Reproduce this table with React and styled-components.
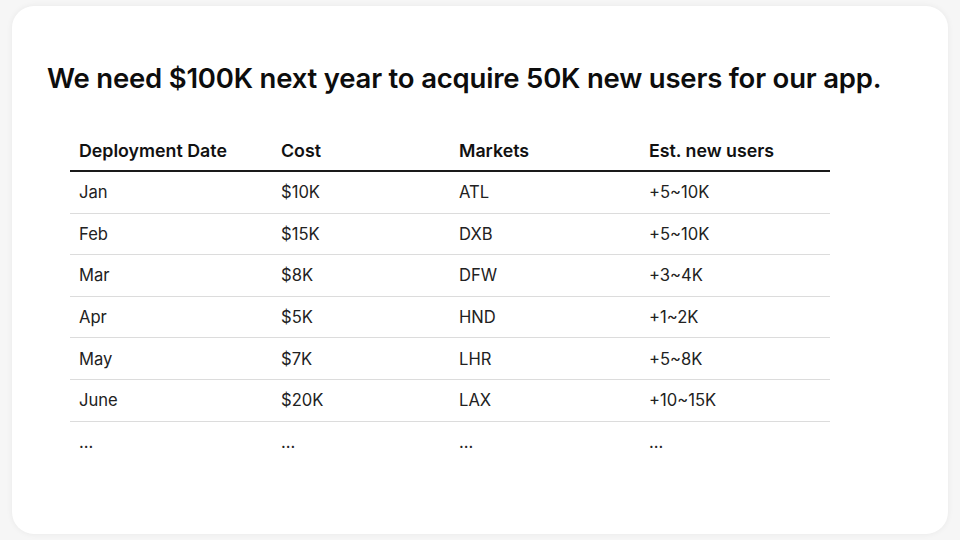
import styled, { createGlobalStyle } from 'styled-components'

const GlobalStyle = createGlobalStyle`
html, body {
    margin: 0;
    padding: 0;
    background: #f6f6f6;
    font-family: Inter, "Noto Sans", sans-serif;
    color: #111;
}
`

const Page = styled.div`
width: 960px;
height: 540px;
padding: 6px 12px;
box-sizing: border-box;
display: flex;
`

const Card = styled.div`
flex: 1;
background: #fff;
border-radius: 22px;
box-shadow: 0 0 6px rgba(0, 0, 0, 0.06);
padding: 55px 35px 0 35px;
box-sizing: border-box;
`

const Title = styled.h1`
margin: 0 0 45px 0;
font-size: 27.5px;
font-weight: 600;
line-height: 34px;
letter-spacing: -0.2px;
color: #0d0d0d;
`

const Table = styled.table`
margin-left: 23px;
width: 760px;
border-collapse: collapse;
font-size: 16.6px;
`

const Head = styled.th`
text-align: left;
font-size: 17.8px;
font-weight: 600;
padding: 0 9px 9px 9px;
height: 27px;
border-bottom: 2px solid #1a1a1a;
width: ${p => p.w}px;
box-sizing: border-box;
`

const Row = styled.tr`
border-bottom: 1px solid ${p => (p.last ? 'transparent' : '#dcdcdc')};
`

const Cell = styled.td`
padding: 0 9px;
height: 40.6px;
font-weight: 400;
color: #222;
`

const columns = [
    { label: 'Deployment Date', w: 202 },
    { label: 'Cost', w: 178 },
    { label: 'Markets', w: 190 },
    { label: 'Est. new users', w: 190 },
]

const rows = [
    ['Jan', '$10K', 'ATL', '+5~10K'],
    ['Feb', '$15K', 'DXB', '+5~10K'],
    ['Mar', '$8K', 'DFW', '+3~4K'],
    ['Apr', '$5K', 'HND', '+1~2K'],
    ['May', '$7K', 'LHR', '+5~8K'],
    ['June', '$20K', 'LAX', '+10~15K'],
    ['...', '...', '...', '...'],
]

const App = () => {
    return (
        <Page>
            <GlobalStyle />
            <Card>
                <Title>We need $100K next year to acquire 50K new users for our app.</Title>
                <Table>
                    <thead>
                        <tr>
                            {columns.map(c => <Head key={c.label} w={c.w}>{c.label}</Head>)}
                        </tr>
                    </thead>
                    <tbody>
                        {rows.map((r, i) => (
                            <Row key={i} last={i === rows.length - 1}>
                                {r.map((v, j) => <Cell key={j}>{v}</Cell>)}
                            </Row>
                        ))}
                    </tbody>
                </Table>
            </Card>
        </Page>
    )
}

export default App
